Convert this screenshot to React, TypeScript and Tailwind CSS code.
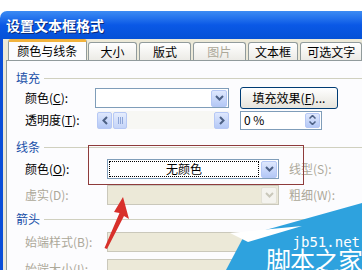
import type { ReactNode } from "react";

function Chevron({ disabled }: { disabled?: boolean }) {
  return (
    <div
      className={`flex items-center justify-center w-[16px] h-[17px] rounded-[2px] border ${
        disabled ? "border-[#e3e1d6] bg-[#f4f3ee]" : "border-[#b6c8f5] bg-gradient-to-b from-[#dfe8fd] to-[#b4c8f6]"
      }`}
    >
      <svg width="9" height="6" viewBox="0 0 9 6">
        <path d="M1 1 L4.5 4.5 L8 1" fill="none" stroke={disabled ? "#c9c7ba" : "#4d6185"} strokeWidth="2" />
      </svg>
    </div>
  );
}

function Dropdown({ className, children, disabled, focused }: { className: string; children?: ReactNode; disabled?: boolean; focused?: boolean }) {
  return (
    <div className={`flex items-center h-[20px] border pl-[1px] pr-[1px] ${disabled ? "border-[#cac8bb] bg-[#ece9d8]" : "border-[#7f9db9] bg-white"} ${className}`}>
      <div className="flex-1 h-[16px] flex items-center justify-center mr-[2px]">
        {focused ? (
          <div className="w-full h-full border border-dotted border-black flex items-center justify-center leading-none">{children}</div>
        ) : (
          children
        )}
      </div>
      <Chevron disabled={disabled} />
    </div>
  );
}

function Heading({ text, className }: { text: string; className: string }) {
  return (
    <div className={`flex items-center h-[18px] pl-[9px] ${className}`}>
      <span className="text-[#2050a8] mr-[4px]">{text}</span>
      <div className="flex-1 h-px bg-[#d0d0bf]" />
    </div>
  );
}

function Label({ children, w, disabled }: { children: ReactNode; w: string; disabled?: boolean }) {
  return <div className={`pl-[18px] shrink-0 ${w} ${disabled ? "text-[#aca899]" : ""}`}>{children}</div>;
}

function Tab({ text, className, disabled }: { text: string; className: string; disabled?: boolean }) {
  return (
    <div
      className={`h-[18px] flex items-center justify-center border border-b-0 border-[#919b9c] rounded-t-[3px] bg-gradient-to-b from-white to-[#ecebe6] ${
        disabled ? "text-[#aca899]" : ""
      } ${className}`}
    >
      {text}
    </div>
  );
}

export default function App() {
  return (
    <div className="relative w-[362px] h-[270px] overflow-hidden bg-white text-[12px] text-black font-['Noto_Sans_CJK_SC',sans-serif] leading-none">
      <div className="h-[11px]" />
      <div className="h-[28px] rounded-tl-[7px] bg-gradient-to-b from-[#3d8cf3] via-[#0a58e6] to-[#0551d6] flex items-center pl-[6px]">
        <span className="text-white font-bold text-[14px] [text-shadow:1px_1px_0_#0a2a7a]">设置文本框格式</span>
      </div>
      <div className="h-[231px] border-l-[3px] border-[#0a4ed8] bg-[#ece9d8] flex flex-col">
        <div className="h-[24px] flex items-end pl-[5px]">
          <div className="w-[79px] h-[21px] flex items-center justify-center bg-[#fcfcfe] border-x border-[#919b9c] border-t-[3px] border-t-[#f2b33d] rounded-t-[3px]">
            颜色与线条
          </div>
          <Tab text="大小" className="w-[50px] ml-px" />
          <Tab text="版式" className="w-[52px] ml-[2px]" />
          <Tab text="图片" className="w-[53px] ml-[2px]" disabled />
          <Tab text="文本框" className="w-[51px] ml-[2px]" />
          <Tab text="可选文字" className="w-[62px] ml-[2px]" />
        </div>
        <div className="flex-1 ml-[3px] border-l border-t border-[#919b9c] bg-[#fcfcfe] flex flex-col">
          <Heading text="填充" className="mt-[8px]" />
          <div className="flex items-center h-[20px] mt-px">
            <Label w="w-[88px]">
              颜色(<span className="underline">C</span>):
            </Label>
            <Dropdown className="w-[134px]" />
            <div className="ml-[11px] w-[98px] h-[22px] rounded-[3px] border border-[#003c74] bg-gradient-to-b from-white to-[#e6e4dc] flex items-center justify-center">
              填充效果(<span className="underline">F</span>)...
            </div>
          </div>
          <div className="flex items-center h-[20px] mt-[2px]">
            <Label w="w-[90px]">
              透明度(<span className="underline">T</span>):
            </Label>
            <div className="w-[132px] h-[18px] flex items-center bg-[#f7f7f4]">
              <div className="w-[15px] h-[17px] rounded-[2px] border border-[#b6c8f5] bg-gradient-to-b from-[#dfe8fd] to-[#b4c8f6] flex items-center justify-center">
                <svg width="6" height="9" viewBox="0 0 6 9">
                  <path d="M5 1 L1.5 4.5 L5 8" fill="none" stroke="#4d6185" strokeWidth="2" />
                </svg>
              </div>
              <div className="ml-px w-[14px] h-[17px] rounded-[2px] border border-[#b6c8f5] bg-gradient-to-b from-[#e6edfd] to-[#c4d4f8] flex items-center justify-center gap-px">
                <div className="w-px h-[7px] bg-[#8ea6d8]" />
                <div className="w-px h-[7px] bg-[#8ea6d8]" />
                <div className="w-px h-[7px] bg-[#8ea6d8]" />
              </div>
              <div className="flex-1" />
              <div className="w-[15px] h-[17px] rounded-[2px] border border-[#b6c8f5] bg-gradient-to-b from-[#dfe8fd] to-[#b4c8f6] flex items-center justify-center">
                <svg width="6" height="9" viewBox="0 0 6 9">
                  <path d="M1 1 L4.5 4.5 L1 8" fill="none" stroke="#4d6185" strokeWidth="2" />
                </svg>
              </div>
            </div>
            <div className="ml-[11px] w-[82px] h-[19px] border border-[#7f9db9] bg-white flex items-center pl-[3px] pr-px">
              <span className="flex-1">0 %</span>
              <div className="w-[15px] h-[15px] rounded-[2px] border border-[#b6c8f5] bg-gradient-to-b from-[#dfe8fd] to-[#b4c8f6] flex flex-col items-center justify-center gap-[2px]">
                <svg width="7" height="4" viewBox="0 0 7 4">
                  <path d="M0.5 3.5 L3.5 0.5 L6.5 3.5" fill="none" stroke="#4d6185" strokeWidth="1.5" />
                </svg>
                <svg width="7" height="4" viewBox="0 0 7 4">
                  <path d="M0.5 0.5 L3.5 3.5 L6.5 0.5" fill="none" stroke="#4d6185" strokeWidth="1.5" />
                </svg>
              </div>
            </div>
          </div>
          <Heading text="线条" className="mt-[8px]" />
          <div className="flex items-center h-[20px] mt-[3px]">
            <Label w="w-[100px]">
              颜色(<span className="underline">O</span>):
            </Label>
            <Dropdown className="w-[172px]" focused>
              无颜色
            </Dropdown>
            <span className="ml-[10px] text-[#aca899]">线型(S):</span>
          </div>
          <div className="flex items-center h-[20px] mt-[6px]">
            <Label w="w-[100px]" disabled>
              虚实(D):
            </Label>
            <Dropdown className="w-[172px]" disabled />
            <span className="ml-[10px] text-[#aca899]">粗细(W):</span>
          </div>
          <Heading text="箭头" className="mt-[5px]" />
          <div className="flex items-center h-[20px] mt-[4px]">
            <Label w="w-[100px]" disabled>
              始端样式(B):
            </Label>
            <Dropdown className="w-[172px]" disabled />
          </div>
          <div className="flex items-center h-[20px] mt-[7px]">
            <Label w="w-[100px]" disabled>
              始端大小(I):
            </Label>
            <Dropdown className="w-[172px]" disabled />
          </div>
        </div>
      </div>

      {/* red highlight box */}
      <div className="absolute left-[88px] top-[145px] w-[216px] h-[40px] border border-[#8e3b3b]" />

      {/* red arrow */}
      <svg className="absolute left-[98px] top-[192px]" width="34" height="62" viewBox="0 0 34 62">
        <path d="M25 5 L31 27 L26 24 L9 57 L6.5 56 L21.5 21 L16 20 Z" fill="#d8302b" />
      </svg>

      {/* watermark */}
      <svg className="absolute left-[220px] top-[200px]" width="142" height="70" viewBox="0 0 142 70">
        <path d="M6 70 L24 36 L142 3 L142 70 Z" fill="#2ea2de" />
        <path d="M10 33 L82 26 L28 42 Z" fill="#ffffff" />
      </svg>
      <div className="absolute right-[2px] top-[235px] text-white text-[14px] font-['DejaVu_Sans_Mono',monospace] leading-none">
        jb51.net
      </div>
      <div className="absolute right-0 top-[247px] text-white text-[25px] leading-none tracking-[-1px]">脚本之家</div>
    </div>
  );
}
